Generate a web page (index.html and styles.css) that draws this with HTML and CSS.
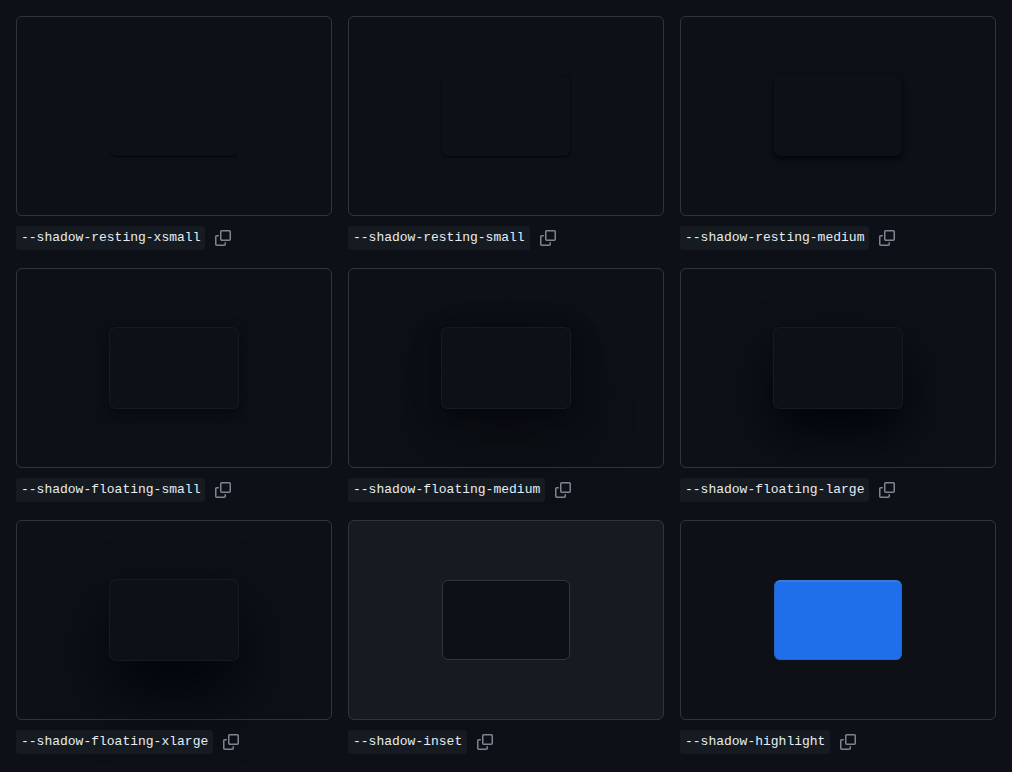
FILE: index.html
```
<!DOCTYPE html>
<html lang="en">
<head>
<meta charset="utf-8">
<title>Shadow tokens</title>
<link rel="stylesheet" href="styles.css">
</head>
<body>
<svg class="sprite" aria-hidden="true"><symbol id="copy" viewBox="0 0 16 16"><path d="M0 6.75C0 5.784.784 5 1.75 5h1.5a.75.75 0 0 1 0 1.5h-1.5a.25.25 0 0 0-.25.25v7.5c0 .138.112.25.25.25h7.5a.25.25 0 0 0 .25-.25v-1.5a.75.75 0 0 1 1.5 0v1.5A1.75 1.75 0 0 1 9.25 16h-7.5A1.75 1.75 0 0 1 0 14.25Z"/><path d="M5 1.75C5 .784 5.784 0 6.75 0h7.5C15.216 0 16 .784 16 1.75v7.5A1.75 1.75 0 0 1 14.25 11h-7.5A1.75 1.75 0 0 1 5 9.25Zm1.75-.25a.25.25 0 0 0-.25.25v7.5c0 .138.112.25.25.25h7.5a.25.25 0 0 0 .25-.25v-7.5a.25.25 0 0 0-.25-.25Z"/></symbol></svg>
<main class="grid">
<section class="token"><div class="preview"><div class="sample resting-xsmall"></div></div><div class="caption"><code class="name">--shadow-resting-xsmall</code><button class="copy" type="button" aria-label="Copy"><svg class="icon"><use href="#copy"/></svg></button></div></section>
<section class="token"><div class="preview"><div class="sample resting-small"></div></div><div class="caption"><code class="name">--shadow-resting-small</code><button class="copy" type="button" aria-label="Copy"><svg class="icon"><use href="#copy"/></svg></button></div></section>
<section class="token"><div class="preview"><div class="sample resting-medium"></div></div><div class="caption"><code class="name">--shadow-resting-medium</code><button class="copy" type="button" aria-label="Copy"><svg class="icon"><use href="#copy"/></svg></button></div></section>
<section class="token"><div class="preview"><div class="sample floating-small"></div></div><div class="caption"><code class="name">--shadow-floating-small</code><button class="copy" type="button" aria-label="Copy"><svg class="icon"><use href="#copy"/></svg></button></div></section>
<section class="token"><div class="preview"><div class="sample floating-medium"></div></div><div class="caption"><code class="name">--shadow-floating-medium</code><button class="copy" type="button" aria-label="Copy"><svg class="icon"><use href="#copy"/></svg></button></div></section>
<section class="token"><div class="preview"><div class="sample floating-large"></div></div><div class="caption"><code class="name">--shadow-floating-large</code><button class="copy" type="button" aria-label="Copy"><svg class="icon"><use href="#copy"/></svg></button></div></section>
<section class="token"><div class="preview"><div class="sample floating-xlarge"></div></div><div class="caption"><code class="name">--shadow-floating-xlarge</code><button class="copy" type="button" aria-label="Copy"><svg class="icon"><use href="#copy"/></svg></button></div></section>
<section class="token"><div class="preview muted"><div class="sample inset"></div></div><div class="caption"><code class="name">--shadow-inset</code><button class="copy" type="button" aria-label="Copy"><svg class="icon"><use href="#copy"/></svg></button></div></section>
<section class="token"><div class="preview"><div class="sample highlight"></div></div><div class="caption"><code class="name">--shadow-highlight</code><button class="copy" type="button" aria-label="Copy"><svg class="icon"><use href="#copy"/></svg></button></div></section>
</main>
</body>
</html>
```

FILE: styles.css
```
* { box-sizing: border-box; }
body { margin: 0; background: #0d1117; color: #e6edf3; font-family: "Noto Sans", sans-serif; }
.sprite { display: none; }
.grid { display: grid; grid-template-columns: repeat(3, minmax(0, 1fr)); gap: 16px; padding: 16px; }
.preview { display: flex; align-items: center; justify-content: center; height: 200px; border: 1px solid #30363d; border-radius: 6px; }
.muted { background: #161b22; }
.sample { width: 128px; height: 80px; border-radius: 6px; background: #0d1117; }
.caption { display: flex; align-items: center; gap: 4px; height: 28px; margin-top: 8px; }
.name { padding: 4px 5px; border-radius: 3px; background: #161b22; color: #e6edf3; font: 13px/16px "Liberation Mono", monospace; }
.copy { display: flex; align-items: center; justify-content: center; width: 28px; height: 28px; padding: 0; border: 0; border-radius: 6px; background: transparent; color: #7d8590; cursor: pointer; }
.icon { width: 16px; height: 16px; fill: currentColor; }
.resting-xsmall { box-shadow: 0 1px 1px 0 #010409cc; }
.resting-small { box-shadow: 0 1px 1px 0 #01040999, 0 1px 3px 0 #01040999; }
.resting-medium { box-shadow: 0 1px 1px 0 #01040966, 0 3px 6px 0 #010409cc; }
.floating-small { box-shadow: 0 0 0 1px #161b22, 0 6px 12px -3px #01040966, 0 6px 18px 0 #01040966; }
.floating-medium { box-shadow: 0 0 0 1px #161b22, 0 8px 16px -4px #01040966, 0 4px 32px -4px #01040966, 0 24px 48px -12px #01040966, 0 48px 96px -24px #01040966; }
.floating-large { box-shadow: 0 0 0 1px #161b22, 0 24px 48px 0 #010409; }
.floating-xlarge { box-shadow: 0 0 0 1px #161b22, 0 32px 64px 0 #010409; }
.inset { border: 1px solid #30363d; box-shadow: inset 0 1px 0 0 #0104093d; }
.highlight { border: 1px solid #2a64bd; border-top-color: #3a78d8; background: #1f6feb; box-shadow: inset 0 1px 0 0 #ffffff1a; }
```
